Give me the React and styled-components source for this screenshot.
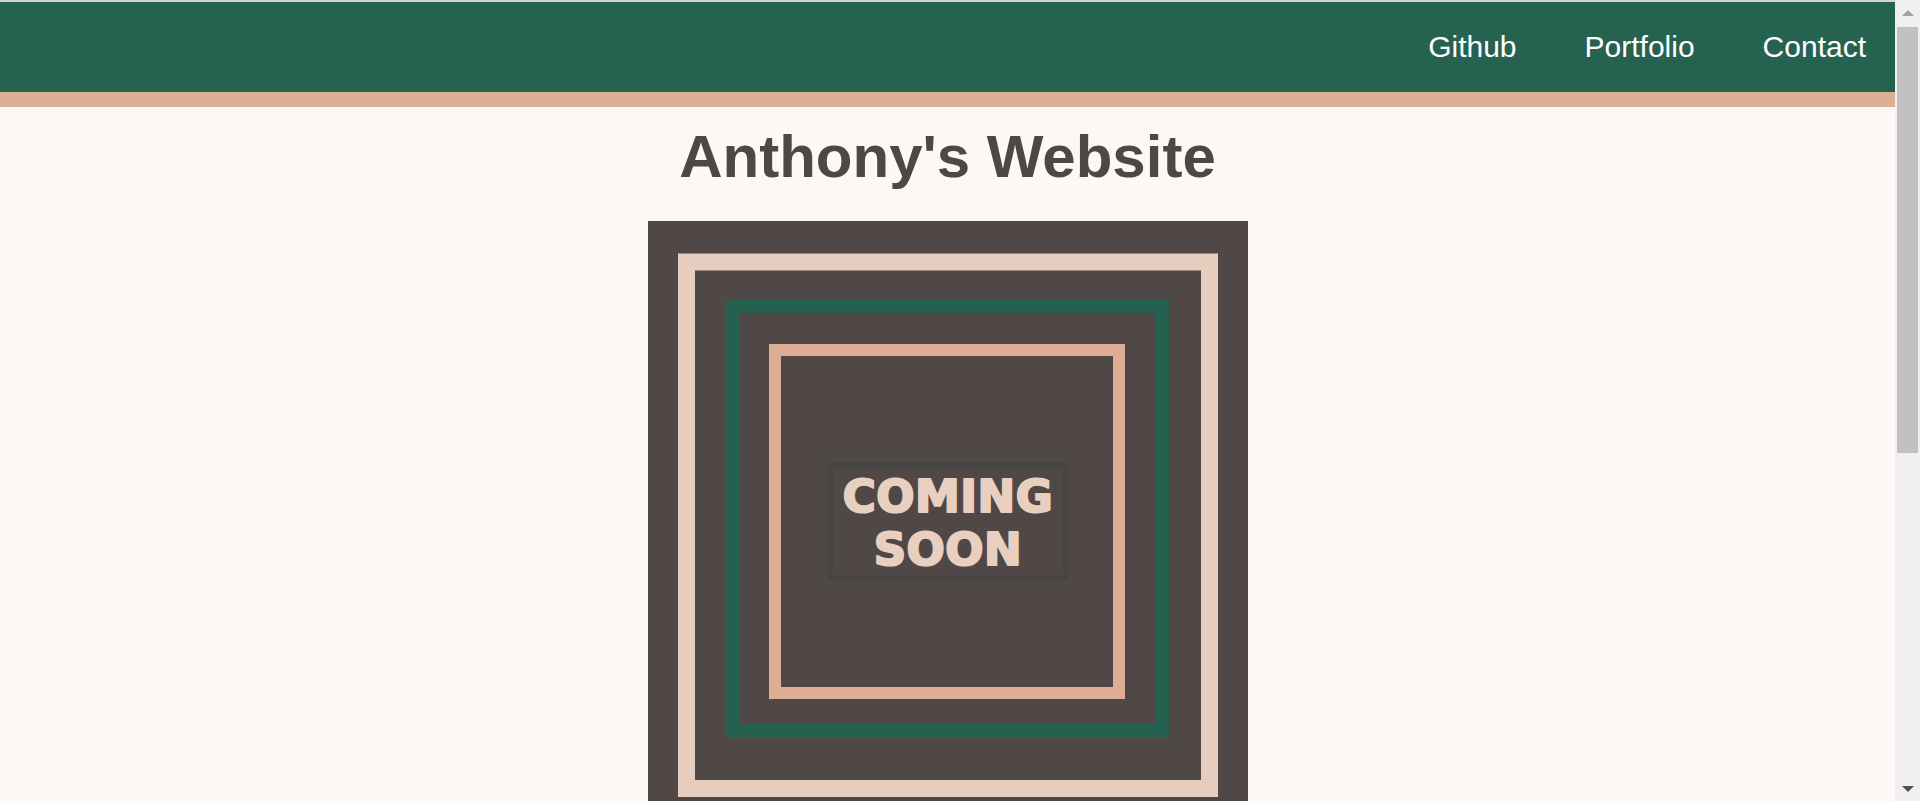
import styled, { createGlobalStyle } from "styled-components";

const GlobalStyle = createGlobalStyle`
    html, body {
        margin: 0;
        padding: 0;
        height: 100%;
        overflow: hidden;
        background-color: #fdf8f5;
    }

    body {
        font-family: "Liberation Sans", Arial, sans-serif;
    }

    #root {
        height: 100%;
    }
`;

const NAV_LINKS = ["Github", "Portfolio", "Contact"];

const ComingSoon = () => {
    return (
        <StPicture viewBox="0 0 600 600" width="600" height="600">
            <rect width="600" height="600" fill="#504846" />
            <rect x="38.5" y="41" width="523" height="526.5" fill="none" stroke="#e7cdbe" strokeWidth="17" />
            <rect x="84" y="85" width="430" height="425" fill="none" stroke="#266050" strokeWidth="14" />
            <rect x="127" y="129" width="344" height="343" fill="none" stroke="#ddae93" strokeWidth="12" />
            <rect x="182.5" y="243.5" width="235" height="113" fill="none" stroke="#474444" strokeWidth="5" />
            <StSoonText x="300" y="291">COMING</StSoonText>
            <StSoonText x="300" y="344">SOON</StSoonText>
        </StPicture>
    );
};

// the window's scrollbar, drawn as a rail beside the scrolling pane
const ScrollRail = () => {
    return (
        <StRail>
            <StRailButton>
                <StArrow $dir="up" />
            </StRailButton>
            <StTrack>
                <StThumb />
            </StTrack>
            <StRailButton>
                <StArrow $dir="down" />
            </StRailButton>
        </StRail>
    );
};

const App = () => {
    return (
        <StWindow>
            <GlobalStyle />
            <StPage>
                <StHeader>
                    <StNav>
                        {NAV_LINKS.map((label) => (
                            <StNavLink key={label} href="#">
                                {label}
                            </StNavLink>
                        ))}
                    </StNav>
                </StHeader>
                <StMain>
                    <StTitle>Anthony's Website</StTitle>
                    <ComingSoon />
                </StMain>
            </StPage>
            <ScrollRail />
        </StWindow>
    );
};

export default App;

const StWindow = styled.div`
    display: flex;
    height: 100%;
`;

const StPage = styled.div`
    flex: 1;
    min-width: 0;
    overflow-y: auto;
    scrollbar-width: none;
    border-top: 2px solid #d3d3d3;
`;

const StHeader = styled.header`
    height: 90px;
    background-color: #266250;
    border-bottom: 15px solid #ddaf94;
    display: flex;
    align-items: center;
    justify-content: flex-end;
    padding-right: 29px;
`;

const StNav = styled.nav`
    display: flex;
    gap: 68px;
`;

const StNavLink = styled.a`
    color: #ffffff;
    font-size: 30px;
    line-height: 34px;
    text-decoration: none;
`;

const StMain = styled.main`
    display: flex;
    flex-direction: column;
    align-items: center;
    padding-bottom: 584px;
`;

const StTitle = styled.h1`
    margin: 15px 0 30px;
    font-size: 60px;
    line-height: 69px;
    font-weight: 700;
    color: #4f4745;
`;

const StPicture = styled.svg`
    display: block;
    flex-shrink: 0;
`;

const StSoonText = styled.text`
    font-family: "DejaVu Sans", sans-serif;
    font-weight: 700;
    font-size: 45px;
    letter-spacing: 0.5px;
    text-anchor: middle;
    fill: #e8cfc0;
    stroke: #e8cfc0;
    stroke-width: 2.2px;
    stroke-linejoin: round;
`;

const StRail = styled.div`
    width: 25px;
    flex-shrink: 0;
    display: flex;
    flex-direction: column;
    background-color: #f0f0f0;
`;

const StRailButton = styled.div`
    height: 27px;
    display: flex;
    align-items: center;
    justify-content: center;
`;

const StArrow = styled.div`
    width: 0;
    height: 0;
    border-left: 6px solid transparent;
    border-right: 6px solid transparent;
    ${({ $dir }) =>
        $dir === "up"
            ? "border-bottom: 6px solid #a3a3a3; margin-top: -2px;"
            : "border-top: 6px solid #505050; margin-top: 2px;"}
`;

const StTrack = styled.div`
    flex: 1;
    padding: 0 2px;
`;

const StThumb = styled.div`
    height: 426px;
    background-color: #c1c1c1;
`;
